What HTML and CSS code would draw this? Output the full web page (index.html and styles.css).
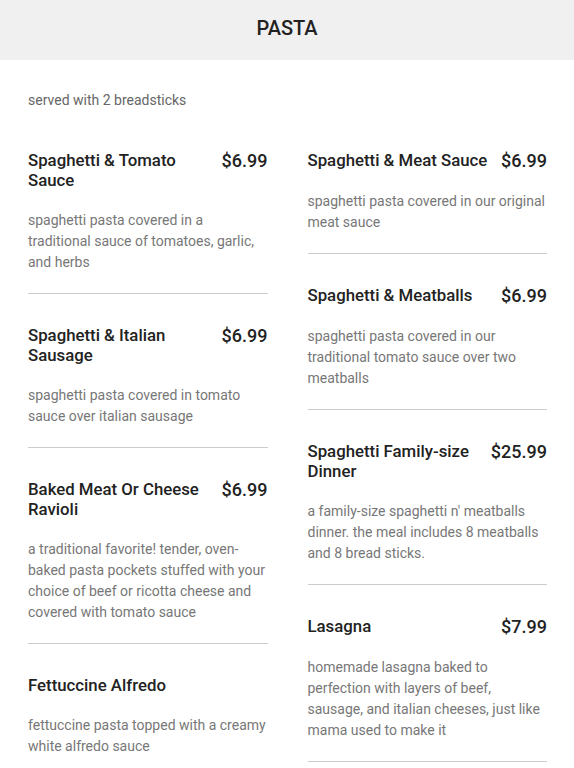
FILE: index.html
```html
<!DOCTYPE html>
<html>
<head>
<meta charset="utf-8">
<link rel="stylesheet" href="styles.css">
</head>
<body>
<header class="header"><h1>PASTA</h1></header>
<main class="content">
  <p class="note">served with 2 breadsticks</p>
  <div class="columns">
    <div class="col">
      <div class="item">
        <div class="item-head"><h2>Spaghetti &amp; Tomato Sauce</h2><span class="price">$6.99</span></div>
        <p class="desc">spaghetti pasta covered in a traditional sauce of tomatoes, garlic, and herbs</p>
      </div>
      <div class="item">
        <div class="item-head"><h2>Spaghetti &amp; Italian Sausage</h2><span class="price">$6.99</span></div>
        <p class="desc">spaghetti pasta covered in tomato sauce over italian sausage</p>
      </div>
      <div class="item">
        <div class="item-head"><h2>Baked Meat Or Cheese Ravioli</h2><span class="price">$6.99</span></div>
        <p class="desc">a traditional favorite! tender, oven-baked pasta pockets stuffed with your choice of beef or ricotta cheese and covered with tomato sauce</p>
      </div>
      <div class="item">
        <div class="item-head"><h2>Fettuccine Alfredo</h2><span class="price"></span></div>
        <p class="desc">fettuccine pasta topped with a creamy white alfredo sauce</p>
      </div>
    </div>
    <div class="col">
      <div class="item">
        <div class="item-head"><h2>Spaghetti &amp; Meat Sauce</h2><span class="price">$6.99</span></div>
        <p class="desc">spaghetti pasta covered in our original meat sauce</p>
      </div>
      <div class="item">
        <div class="item-head"><h2>Spaghetti &amp; Meatballs</h2><span class="price">$6.99</span></div>
        <p class="desc">spaghetti pasta covered in our traditional tomato sauce over two meatballs</p>
      </div>
      <div class="item">
        <div class="item-head"><h2>Spaghetti Family-size Dinner</h2><span class="price">$25.99</span></div>
        <p class="desc">a family-size spaghetti n' meatballs dinner. the meal includes 8 meatballs and 8 bread sticks.</p>
      </div>
      <div class="item">
        <div class="item-head"><h2>Lasagna</h2><span class="price">$7.99</span></div>
        <p class="desc">homemade lasagna baked to perfection with layers of beef, sausage, and italian cheeses, just like mama used to make it</p>
      </div>
    </div>
  </div>
</main>
</body>
</html>
```
FILE: styles.css
```css
* { box-sizing: border-box; }
html, body { margin: 0; padding: 0; background: #fff; }
body { font-family: Roboto, "Liberation Sans", sans-serif; color: #222; }
.header {
  background: #f0f0f0;
  height: 60px;
  display: flex;
  align-items: center;
  justify-content: center;
  padding-bottom: 4px;
}
.header h1 {
  margin: 0;
  font-size: 20px;
  font-weight: 500;
  color: #222;
  line-height: 24px;
}
.content { padding: 0 27px 0 28px; }
.note {
  margin: 30px 0 39px;
  font-size: 14px;
  line-height: 21px;
  color: #666;
}
.columns {
  display: grid;
  grid-template-columns: 1fr 1fr;
  column-gap: 40px;
}
.item {
  border-bottom: 1px solid #ccc;
  padding-bottom: 20px;
  margin-bottom: 31px;
}
.item-head {
  display: flex;
  justify-content: space-between;
  align-items: flex-start;
  gap: 10px;
}
.item-head h2 {
  margin: 0;
  font-size: 16.8px;
  font-weight: 500;
  line-height: 20px;
  color: #222;
}
.price {
  font-size: 18px;
  font-weight: 500;
  line-height: 21px;
  color: #222;
  white-space: nowrap;
}
.desc {
  margin: 20px 0 0;
  font-size: 14px;
  line-height: 21px;
  color: #777;
}
```
